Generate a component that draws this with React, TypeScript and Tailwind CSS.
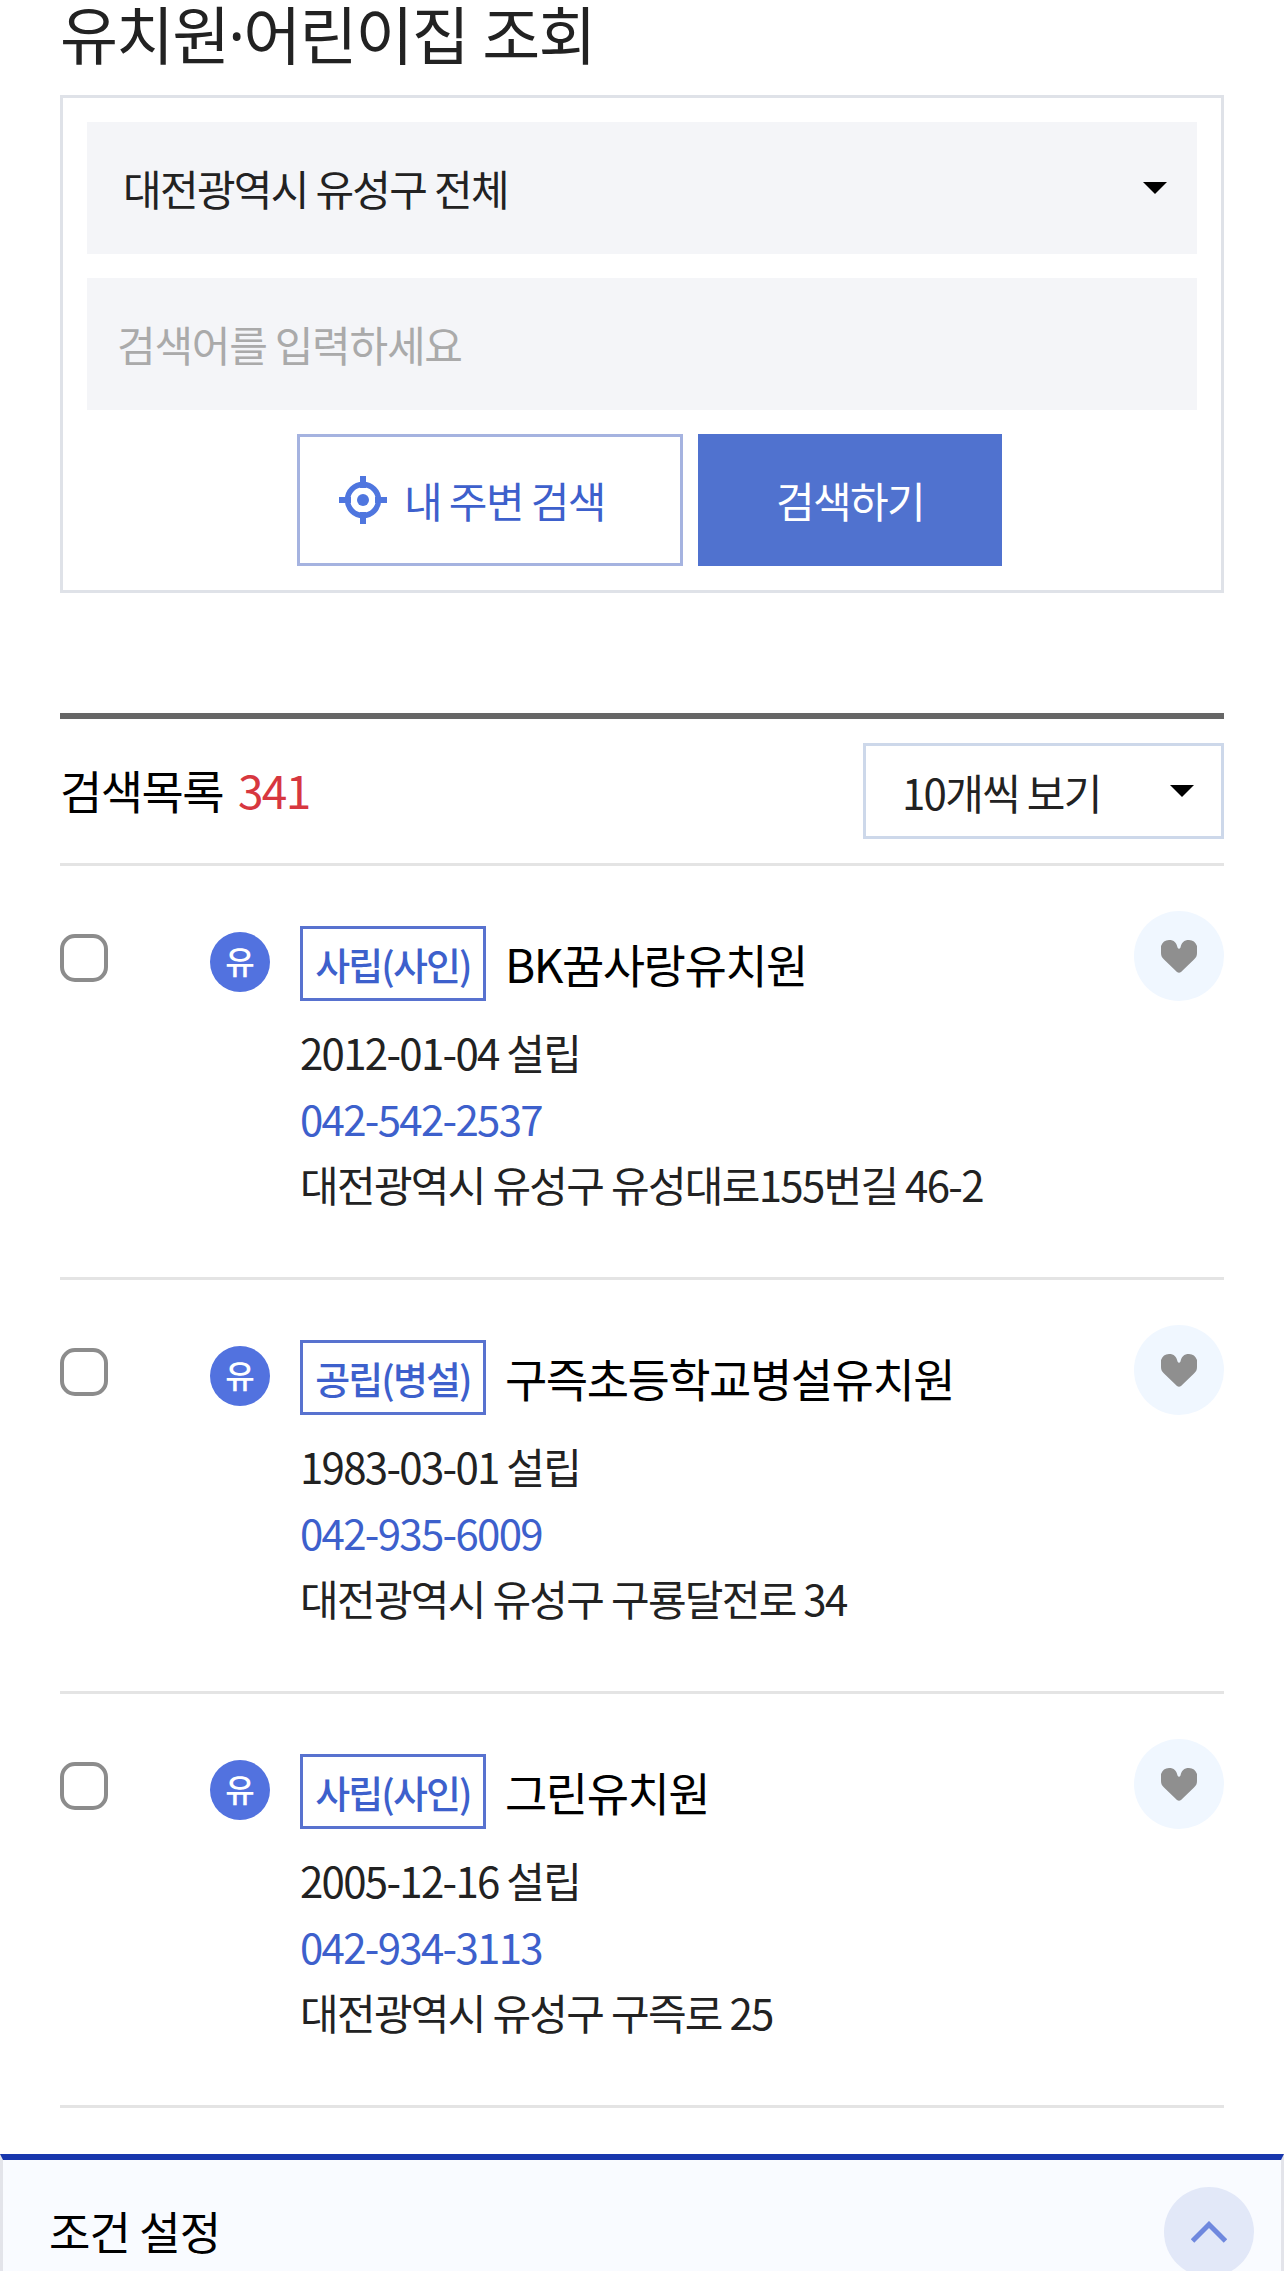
import { useState } from "react";

type Kindergarten = {
  name: string;
  kind: string;
  founded: string;
  phone: string;
  address: string;
};

const items: Kindergarten[] = [
  {
    name: "BK꿈사랑유치원",
    kind: "사립(사인)",
    founded: "2012-01-04",
    phone: "042-542-2537",
    address: "대전광역시 유성구 유성대로155번길 46-2",
  },
  {
    name: "구즉초등학교병설유치원",
    kind: "공립(병설)",
    founded: "1983-03-01",
    phone: "042-935-6009",
    address: "대전광역시 유성구 구룡달전로 34",
  },
  {
    name: "그린유치원",
    kind: "사립(사인)",
    founded: "2005-12-16",
    phone: "042-934-3113",
    address: "대전광역시 유성구 구즉로 25",
  },
];

function Caret() {
  return (
    <svg width="24" height="12" viewBox="0 0 24 12" className="shrink-0">
      <path d="M0 0h24L12 12z" fill="#000" />
    </svg>
  );
}

function TargetIcon() {
  return (
    <svg width="48" height="48" viewBox="0 0 48 48" className="shrink-0" fill="none">
      <circle cx="24" cy="24" r="15.5" stroke="#4f76df" strokeWidth="5.5" />
      <circle cx="24" cy="24" r="6" fill="#4f76df" />
      <path d="M24 0v12M24 36v12M0 24h12M36 24h12" stroke="#4f76df" strokeWidth="6" />
    </svg>
  );
}

function Heart() {
  return (
    <svg width="36" height="33" viewBox="0 0 36 33">
      <path
        d="M0 6C1.500 2 4 0 8 0c5 0 7.500 2.500 8.500 7.500q1.500 2.500 3 0C20.500 2.500 23 0 28 0c4 0 6.500 2 8 6v7c0 3-1 4.500-3 6.500L20 32q-2 1.500-4 0L3 19.500C1 17.500 0 16 0 13z"
        fill="#8f8f8f"
      />
    </svg>
  );
}

function Row({ item }: { item: Kindergarten }) {
  const [checked, setChecked] = useState(false);

  return (
    <li className="flex h-[414px] items-start border-b-3 border-[#e4e4e4] pt-[45px]">
      <button
        role="checkbox"
        aria-checked={checked}
        aria-label={item.name}
        onClick={() => setChecked(!checked)}
        className="mt-[23px] size-12 shrink-0 rounded-[15px] border-4 border-[#8c8c8c] bg-white aria-checked:bg-[#5070cf]"
      />
      <span className="mt-[21px] ml-[102px] flex size-[60px] shrink-0 items-center justify-center rounded-full bg-[#5272df] text-[32px] leading-none font-medium text-white">
        <span className="-mt-1">유</span>
      </span>
      <div className="mt-[15px] ml-[30px] flex-1">
        <div className="flex h-[75px] items-center">
          <span className="flex h-[75px] w-[186px] items-center justify-center border-3 border-[#5872cf] text-[38px] font-medium tracking-[-1.9px] whitespace-nowrap text-[#3d60cc]">
            {item.kind}
          </span>
          <strong className="ml-[19px] text-[46px] font-normal tracking-[-1.5px] whitespace-nowrap text-black">
            {item.name}
          </strong>
        </div>
        <div className="mt-[18px] text-[42px] leading-[66px] tracking-[-1.7px] whitespace-nowrap">
          <p>{item.founded} 설립</p>
          <p className="text-[#3d60cc]">{item.phone}</p>
          <p>{item.address}</p>
        </div>
      </div>
      <button
        aria-label="관심 등록"
        className="flex size-[90px] shrink-0 items-center justify-center rounded-full bg-[#f0f7ff]"
      >
        <Heart />
      </button>
    </li>
  );
}

export default function App() {
  const [keyword, setKeyword] = useState("");

  return (
    <div className="flex h-[2271px] flex-col overflow-hidden bg-white font-['Noto_Sans_CJK_KR',sans-serif] text-[#222]">
      <main className="px-[60px]">
        {/* Noto Sans first: its middle dot is narrower than the CJK one */}
        <h1 className="h-[95px] font-['Noto_Sans','Noto_Sans_CJK_KR',sans-serif] text-[63px] leading-[70px] tracking-[-1.85px] whitespace-nowrap">
          유치원·어린이집 조회
        </h1>

        <section className="flex h-[498px] flex-col gap-6 border-3 border-[#dfe2e8] p-6">
          <button className="flex h-[132px] shrink-0 items-center justify-between bg-[#f4f5f8] pr-[30px] pl-9 text-[42px] tracking-[-1.7px]">
            <span className="pb-px">대전광역시 유성구 전체</span>
            <Caret />
          </button>
          <input
            className="h-[132px] shrink-0 bg-[#f4f5f8] px-[30px] pb-px text-[42px] tracking-[-1.25px] outline-none placeholder:text-[#aaa]"
            placeholder="검색어를 입력하세요"
            value={keyword}
            onChange={(e) => setKeyword(e.target.value)}
          />
          <div className="flex justify-center gap-[15px] pl-[15px] text-[42px] tracking-[-1.7px]">
            <button className="flex h-[132px] w-[386px] items-center gap-[17px] border-3 border-[#a5b3e0] pl-[39px] text-[#3d60cc]">
              <TargetIcon />
              <span className="pb-px tracking-[-1.6px]">내 주변 검색</span>
            </button>
            <button className="h-[132px] w-[304px] bg-[#5072cf] pb-px text-white">
              검색하기
            </button>
          </div>
        </section>

        <div className="mt-[120px] flex h-[153px] items-center justify-between border-t-6 border-b-3 border-t-[#666] border-b-[#e4e4e4]">
          <h2 className="flex items-center gap-[15px] pb-[3px] text-[46px] tracking-[-1.6px] text-black">
            검색목록
            <span className="text-[#d7373f]">341</span>
          </h2>
          <button className="flex h-24 w-[361px] items-center justify-between border-3 border-[#cdd8ea] pr-[27px] pl-9 text-[42px] tracking-[-1.7px]">
            10개씩 보기
            <Caret />
          </button>
        </div>

        <ul>
          {items.map((item) => (
            <Row key={item.name} item={item} />
          ))}
        </ul>
      </main>

      <footer className="mt-[46px] flex h-[150px] shrink-0 items-start justify-between border-x-3 border-t-6 border-x-[#e3e4ea] border-t-[#1837ad] bg-[#f9fbff] pt-[27px] pr-[27px] pl-[46px]">
        <h2 className="text-[45px] leading-[88px] tracking-[-0.9px] text-black">조건 설정</h2>
        <button
          aria-label="펼치기"
          className="flex size-[90px] items-center justify-center rounded-full bg-[#e2e8f8]"
        >
          <svg width="36" height="22" viewBox="0 0 36 22" fill="none">
            <path d="M1.500 20L18 3.500 34.500 20" stroke="#6f88de" strokeWidth="5" />
          </svg>
        </button>
      </footer>
    </div>
  );
}
